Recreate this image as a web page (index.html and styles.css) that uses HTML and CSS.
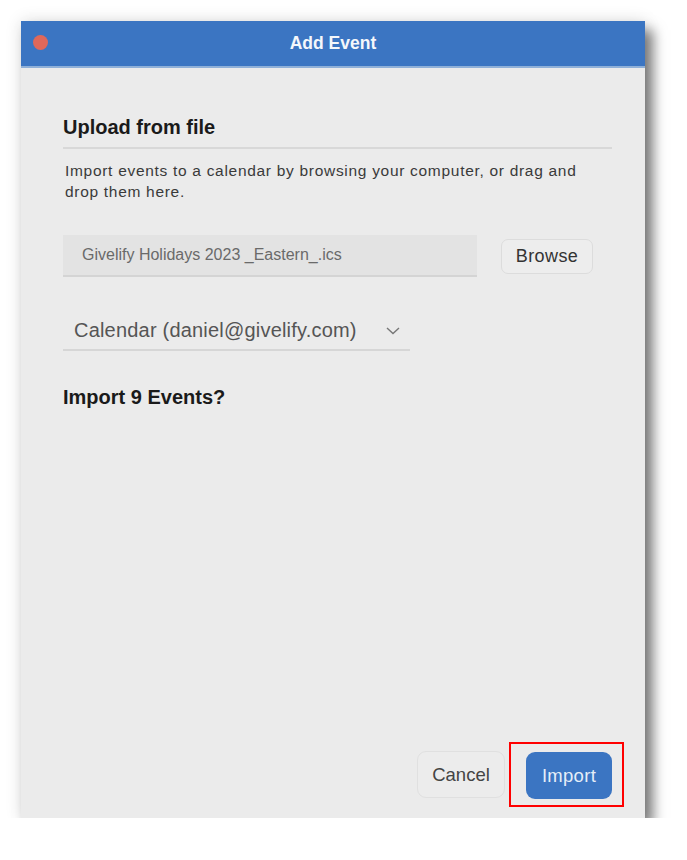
FILE: index.html
```html
<!DOCTYPE html>
<html lang="en">
  <head>
    <meta charset="UTF-8" />
    <meta name="viewport" content="width=device-width, initial-scale=1.0" />
    <title>Add Event</title>
    <link rel="stylesheet" href="styles.css">
  </head>
  <body>
    <div class="dialog">
      <div class="titlebar">
        <span class="close-dot"></span>
        <h1>Add Event</h1>
      </div>
      <div class="dialog-body">
        <h2 class="section-title">Upload from file</h2>
        <p class="hint">
          Import events to a calendar by browsing your computer, or drag and
          drop them here.
        </p>
        <div class="file-row">
          <div class="file-name">Givelify Holidays 2023 _Eastern_.ics</div>
          <button class="btn btn-browse" type="button">Browse</button>
        </div>
        <div class="calendar-select">
          <span>Calendar (daniel@givelify.com)</span>
          <svg class="chevron" width="14" height="8" viewBox="0 0 14 8">
            <path d="M1 1 L7 6.5 L13 1" fill="none" stroke="#777" stroke-width="1.4" />
          </svg>
        </div>
        <h2 class="count-title">Import 9 Events?</h2>
      </div>
      <div class="dialog-footer">
        <button class="btn btn-cancel" type="button">Cancel</button>
        <div class="highlight">
          <button class="btn btn-import" type="button">Import</button>
        </div>
      </div>
    </div>
  </body>
</html>
```

FILE: styles.css
```css
/* Reset */
* {
  box-sizing: border-box;
  margin: 0;
  padding: 0;
  font-family: "Liberation Sans", Arial, sans-serif;
}

body {
  background: #ffffff;
  padding: 21px 0 0 21px;
}

/* Window */
.dialog {
  width: 624px;
  height: 797px;
  background: #ebebeb;
  display: flex;
  flex-direction: column;
  box-shadow: 8px 9px 12px rgba(0, 0, 0, 0.5), 0 0 16px rgba(0, 0, 0, 0.12);
}

.titlebar {
  height: 47px;
  background: #3b75c2;
  border-bottom: 2px solid #8fb0d8;
  display: flex;
  align-items: center;
  justify-content: center;
  position: relative;
}

.close-dot {
  position: absolute;
  left: 12px;
  top: 14px;
  width: 15px;
  height: 15px;
  border-radius: 50%;
  background: #e0685a;
  filter: blur(0.6px);
}

.titlebar h1 {
  color: #f4f7fb;
  font-size: 17.5px;
  font-weight: bold;
}

/* Content */
.dialog-body {
  flex: 1;
  padding: 48px 33px 0 42px;
  color: #1a1a1a;
}

.section-title {
  font-size: 20px;
  font-weight: bold;
  padding-bottom: 8px;
  border-bottom: 2px solid #d8d8d8;
}

.hint {
  max-width: 540px;
  font-size: 15.5px;
  letter-spacing: 0.7px;
  line-height: 20.5px;
  color: #3a3a3a;
  margin-top: 12px;
  padding-left: 2px;
}

.file-row {
  display: flex;
  align-items: center;
  margin-top: 33px;
}

.file-name {
  width: 414px;
  height: 42px;
  background: #e3e3e3;
  border-bottom: 2px solid #d4d4d4;
  color: #6a6a6a;
  font-size: 16px;
  display: flex;
  align-items: center;
  padding-left: 19px;
}

.btn {
  font-family: "Liberation Sans", Arial, sans-serif;
  cursor: pointer;
}

.btn-browse {
  margin-left: 24px;
  width: 92px;
  height: 35px;
  border: 1px solid #dcdcdc;
  border-radius: 7px;
  background: #ededed;
  color: #333;
  font-size: 18px;
  letter-spacing: 0.4px;
}

.calendar-select {
  width: 347px;
  height: 43px;
  margin-top: 31px;
  display: flex;
  align-items: center;
  justify-content: space-between;
  padding: 4px 10px 0 11px;
  border-bottom: 2px solid #d6d6d6;
  color: #555;
  font-size: 20px;
  letter-spacing: 0.2px;
}

.count-title {
  font-size: 20px;
  font-weight: bold;
  margin-top: 35px;
}

/* Footer */
.dialog-footer {
  display: flex;
  justify-content: flex-end;
  align-items: center;
  padding: 0 21px 11px 0;
}

.btn-cancel {
  width: 88px;
  height: 47px;
  border: 1px solid #e0e0e0;
  border-radius: 9px;
  background: #ececec;
  color: #444;
  font-size: 18.5px;
  margin-right: 4px;
}

.highlight {
  border: 2px solid #ff0000;
  padding: 8px 10px 6px 15px;
}

.btn-import {
  display: block;
  width: 86px;
  height: 47px;
  border: none;
  border-radius: 9px;
  background: #3b75c2;
  color: #e6eef8;
  font-size: 18.5px;
  letter-spacing: 0.3px;
}
```
